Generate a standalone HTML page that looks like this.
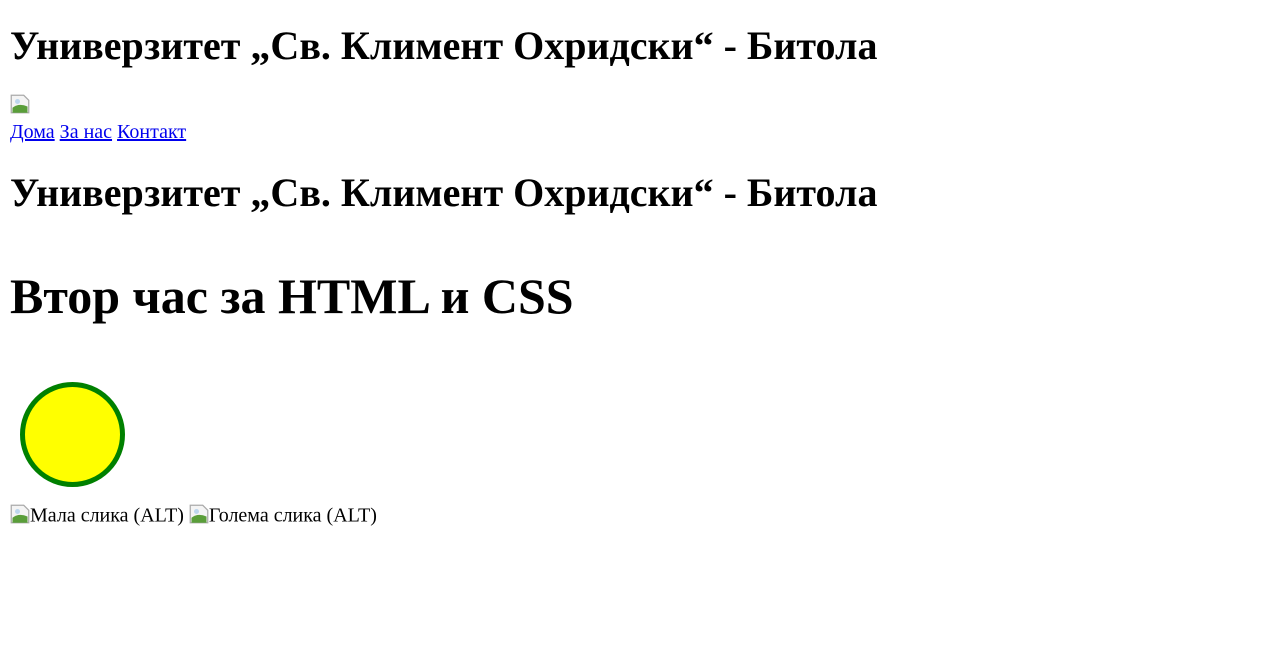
<!DOCTYPE html>
<html style="zoom:1.25"><head><meta charset="utf-8"><style>
body{margin:8px;font-family:"Liberation Serif",serif;font-size:16px;color:#000;background:#fff}
h1{font-size:32px;margin:21.44px 0}
h1.big{font-size:40px;margin:41.2px 0 37.2px}
a{color:#00e}
.bi{display:inline-block;width:16px;height:16px;vertical-align:-2px}
</style></head><body>
<h1 style="margin:17.5px 0 19.9px">Универзитет „Св. Климент Охридски“ - Битола</h1>
<div style="height:21.6px"><svg class="bi" viewBox="0 0 16 16" style="vertical-align:top"><path d="M1 1h10l4 4v10H1z" fill="#f4f4f4" stroke="#aaa"/><path d="M2 15L2 11Q7 7 14 10L14 15z" fill="#5a9e3a"/><circle cx="6" cy="6" r="2" fill="#bcd6ee"/></svg></div>
<div><a href="#">Дома</a> <a href="#">За нас</a> <a href="#">Контакт</a></div>
<h1 style="margin-top:19.8px">Универзитет „Св. Климент Охридски“ - Битола</h1>
<h1 class="big">Втор час за HTML и CSS</h1>
<svg width="100" height="100" style="display:block;margin-bottom:5.6px"><circle cx="50" cy="50" r="40" fill="#ff0" stroke="green" stroke-width="4"/></svg>
<div><svg class="bi" viewBox="0 0 16 16"><path d="M1 1h10l4 4v10H1z" fill="#f4f4f4" stroke="#aaa"/><path d="M2 15L2 11Q7 7 14 10L14 15z" fill="#5a9e3a"/><circle cx="6" cy="6" r="2" fill="#bcd6ee"/></svg>Мала слика (ALT) <svg class="bi" viewBox="0 0 16 16"><path d="M1 1h10l4 4v10H1z" fill="#f4f4f4" stroke="#aaa"/><path d="M2 15L2 11Q7 7 14 10L14 15z" fill="#5a9e3a"/><circle cx="6" cy="6" r="2" fill="#bcd6ee"/></svg>Голема слика (ALT)</div>
</body></html>
